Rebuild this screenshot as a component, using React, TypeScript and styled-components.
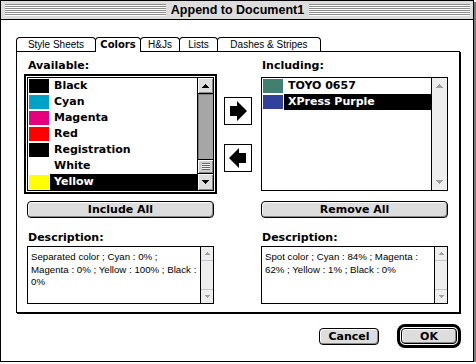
import React from "react";
import styled, { createGlobalStyle, css } from "styled-components";

const GlobalStyle = createGlobalStyle`
  html, body { margin: 0; padding: 0; background: #ffffff; }
  body { font-family: "DejaVu Sans", "Liberation Sans", sans-serif; color: #000; }
  * { box-sizing: border-box; }
`;

const CHARCOAL = `"DejaVu Sans", "Liberation Sans", sans-serif`;
const GENEVA = `"Liberation Sans", "Arial", sans-serif`;

const Window = styled.div`
  width: 474px;
  height: 362px;
  border: 1px solid #000;
  box-shadow: 2px 2px 0 #7a7a7a;
  background: #fff;
  display: flex;
  flex-direction: column;
`;

const TitleBar = styled.div`
  height: 19px;
  flex: none;
  background: #dddddd;
  border-bottom: 1px solid #000;
  display: flex;
  align-items: center;
  gap: 5px;
  padding: 0 3px 0 4px;
`;

const Stripes = styled.div`
  flex: 1;
  height: 12px;
  background: repeating-linear-gradient(to bottom, #8c8c8c 0 1px, #ffffff 1px 2px);
`;

const Title = styled.div`
  font-family: "Liberation Sans", Arial, sans-serif;
  font-weight: bold;
  font-size: 12.5px;
  line-height: 18px;
  white-space: nowrap;
`;

const Content = styled.div`
  flex: 1;
  display: flex;
  flex-direction: column;
  padding: 17px 12px 13px 15px;
`;

const TabRow = styled.div`
  display: flex;
  height: 14px;
  align-items: flex-start;
`;

const Tab = styled.div<{ $w: number; $active?: boolean }>`
  width: ${(p) => p.$w}px;
  height: 14px;
  flex: none;
  border: 1px solid #000;
  border-bottom: none;
  border-radius: 4px 4px 0 0;
  background: #fff;
  text-align: center;
  font-family: ${GENEVA};
  font-size: 10px;
  line-height: 13px;
  white-space: nowrap;
  & + & {
    margin-left: -1px;
  }
  ${(p) =>
    p.$active &&
    css`
      position: relative;
      z-index: 1;
      height: 15px;
      font-family: ${CHARCOAL};
      font-weight: bold;
    `}
`;

const Panel = styled.div`
  width: 444px;
  height: 262px;
  flex: none;
  border: 1px solid #000;
  box-shadow: 1px 1px 0 #000;
  padding: 6px 11px 8px 10px;
  display: flex;
`;

const Column = styled.div`
  width: 187px;
  flex: none;
  display: flex;
  flex-direction: column;
`;

const MiddleColumn = styled.div`
  width: 47px;
  flex: none;
  display: flex;
  flex-direction: column;
  align-items: center;
  padding-top: 39px;
  gap: 19px;
`;

const Label = styled.div<{ $top?: number }>`
  height: 16px;
  padding-left: 1px;
  margin-top: ${(p) => p.$top ?? 0}px;
  font-family: ${CHARCOAL};
  font-weight: bold;
  font-size: 11px;
  line-height: 16px;
  white-space: nowrap;
`;

const ListFrame = styled.div<{ $focused?: boolean }>`
  height: 114px;
  margin-top: 3px;
  border: 1px solid #000;
  display: flex;
  background: #fff;
  ${(p) =>
    p.$focused &&
    css`
      box-shadow: 0 0 0 1px #fff, 0 0 0 3px #000;
    `}
`;

const Rows = styled.div`
  flex: 1;
  display: flex;
  flex-direction: column;
  overflow: hidden;
`;

const Row = styled.div`
  height: 16px;
  flex: none;
  display: flex;
`;

const SwatchCell = styled.div`
  width: 22px;
  flex: none;
  padding: 1px;
`;

const Swatch = styled.div<{ $c: string }>`
  width: 20px;
  height: 14px;
  background: ${(p) => p.$c};
`;

const Name = styled.div<{ $sel?: boolean }>`
  flex: 1;
  padding-left: 4px;
  font-family: ${CHARCOAL};
  font-weight: bold;
  font-size: 11px;
  line-height: 16px;
  white-space: nowrap;
  background: ${(p) => (p.$sel ? "#000" : "transparent")};
  color: ${(p) => (p.$sel ? "#fff" : "#000")};
`;

const ScrollBar = styled.div<{ $w: number; $active?: boolean }>`
  width: ${(p) => p.$w}px;
  flex: none;
  border-left: 1px solid #000;
  display: flex;
  flex-direction: column;
  background: ${(p) => (p.$active ? "#a6a6a6" : "#eeeeee")};
`;

const ArrowCell = styled.div<{ $h: number; $active?: boolean; $end?: boolean; $lined?: boolean }>`
  height: ${(p) => p.$h}px;
  flex: none;
  display: flex;
  align-items: center;
  justify-content: center;
  ${(p) =>
    p.$active
      ? css`
          background: #dddddd;
          box-shadow: inset 1px 1px 0 #fff, inset -1px -1px 0 #888;
          ${p.$end ? "border-top" : "border-bottom"}: 1px solid #000;
        `
      : p.$lined
      ? css`
          ${p.$end ? "border-top" : "border-bottom"}: 1px solid #c4c4c4;
        `
      : ""}
`;

const Track = styled.div<{ $active?: boolean }>`
  flex: 1;
  ${(p) =>
    p.$active &&
    css`
      box-shadow: inset 1px 1px 0 #7a7a7a;
    `}
`;

const Thumb = styled.div`
  height: 14px;
  flex: none;
  background: #cfcfcf;
  border-top: 1px solid #000;
  box-shadow: inset 1px 1px 0 #fff, inset -1px -1px 0 #888;
  display: flex;
  align-items: center;
  justify-content: center;
`;

const Grip = styled.div`
  width: 8px;
  height: 7px;
  background: repeating-linear-gradient(to bottom, #666 0 1px, #f4f4f4 1px 2px);
`;

const Tri = ({ dir, color }: { dir: "up" | "down"; color: string }) => (
  <svg width="7" height="4" viewBox="0 0 7 4" shapeRendering="crispEdges">
    <polygon points={dir === "up" ? "3.5,0 7,4 0,4" : "0,0 7,0 3.5,4"} fill={color} />
  </svg>
);

const SmallTri = ({ dir, color }: { dir: "up" | "down"; color: string }) => (
  <svg width="5" height="3" viewBox="0 0 5 3" shapeRendering="crispEdges">
    <polygon points={dir === "up" ? "2.5,0 5,3 0,3" : "0,0 5,0 2.5,3"} fill={color} />
  </svg>
);

const PushButton = styled.button<{ $w?: number; $h: number }>`
  width: ${(p) => (p.$w ? `${p.$w}px` : "100%")};
  height: ${(p) => p.$h}px;
  flex: none;
  margin: 0;
  padding: 0;
  border: 1px solid #000;
  border-radius: 4px;
  background: #dddddd;
  box-shadow: inset 1px 1px 0 #fff, inset -1px -1px 0 #8a8a8a;
  font-family: ${CHARCOAL};
  font-weight: bold;
  font-size: 11px;
  line-height: 1;
  color: #000;
`;

const WideButton = styled(PushButton)`
  margin-top: 10px;
`;

const DefaultRing = styled.div`
  border: 3px solid #000;
  border-radius: 8px;
  padding: 1px;
  display: flex;
`;

const ArrowButton = styled.div`
  width: 28px;
  height: 28px;
  border: 1px solid #000;
  background: #fff;
  display: flex;
`;

const DescBox = styled.div`
  height: 58px;
  border: 1px solid #000;
  display: flex;
`;

const DescText = styled.div`
  flex: 1;
  padding: 4px 3px;
  font-family: ${GENEVA};
  font-size: 9.7px;
  line-height: 12.5px;
  white-space: nowrap;
`;

const Line = styled.div``;

const Footer = styled.div`
  margin-top: 11px;
  width: 445px;
  display: flex;
  justify-content: flex-end;
  align-items: center;
  gap: 18px;
`;

type Item = { name: string; color: string; selected?: boolean };

const available: Item[] = [
  { name: "Black", color: "#000000" },
  { name: "Cyan", color: "#00a2c8" },
  { name: "Magenta", color: "#e6007e" },
  { name: "Red", color: "#ff0000" },
  { name: "Registration", color: "#000000" },
  { name: "White", color: "#ffffff" },
  { name: "Yellow", color: "#ffff00", selected: true },
];

const including: Item[] = [
  { name: "TOYO 0657", color: "#3f806e" },
  { name: "XPress Purple", color: "#31409a", selected: true },
];

const tabs = [
  { label: "Style Sheets", w: 80 },
  { label: "Colors", w: 46, active: true },
  { label: "H&Js", w: 40 },
  { label: "Lists", w: 39 },
  { label: "Dashes & Stripes", w: 104 },
];

const ActiveScroll = () => (
  <ScrollBar $w={16} $active>
    <ArrowCell $h={16} $active>
      <Tri dir="up" color="#000" />
    </ArrowCell>
    <Track $active />
    <Thumb>
      <Grip />
    </Thumb>
    <ArrowCell $h={17} $active $end>
      <Tri dir="down" color="#000" />
    </ArrowCell>
  </ScrollBar>
);

const InactiveScroll = ({ w, h, lined }: { w: number; h: number; lined?: boolean }) => (
  <ScrollBar $w={w}>
    <ArrowCell $h={h} $lined={lined}>
      {w > 14 ? <Tri dir="up" color="#a0a0a0" /> : <SmallTri dir="up" color="#a0a0a0" />}
    </ArrowCell>
    <Track />
    <ArrowCell $h={h} $end $lined={lined}>
      {w > 14 ? <Tri dir="down" color="#a0a0a0" /> : <SmallTri dir="down" color="#a0a0a0" />}
    </ArrowCell>
  </ScrollBar>
);

const ColorList = ({ items, focused }: { items: Item[]; focused?: boolean }) => (
  <ListFrame $focused={focused}>
    <Rows>
      {items.map((it) => (
        <Row key={it.name}>
          <SwatchCell>
            <Swatch $c={it.color} />
          </SwatchCell>
          <Name $sel={it.selected}>{it.name}</Name>
        </Row>
      ))}
    </Rows>
    {focused ? <ActiveScroll /> : <InactiveScroll w={16} h={16} />}
  </ListFrame>
);

const Description = ({ lines }: { lines: string[] }) => (
  <DescBox>
    <DescText>
      {lines.map((l, i) => (
        <Line key={i}>{l}</Line>
      ))}
    </DescText>
    <InactiveScroll w={13} h={14} lined />
  </DescBox>
);

const RightArrow = () => (
  <svg width="26" height="26" viewBox="0 0 26 26">
    <polygon points="5,8 12,8 12,3 22,13 12,23 12,18 5,18" fill="#000" />
  </svg>
);

const LeftArrow = () => (
  <svg width="26" height="26" viewBox="0 0 26 26">
    <polygon points="21,8 14,8 14,3 4,13 14,23 14,18 21,18" fill="#000" />
  </svg>
);

export default function App() {
  return (
    <>
      <GlobalStyle />
      <Window>
        <TitleBar>
          <Stripes />
          <Title>Append to Document1</Title>
          <Stripes />
        </TitleBar>
        <Content>
          <TabRow>
            {tabs.map((t) => (
              <Tab key={t.label} $w={t.w} $active={t.active}>
                {t.label}
              </Tab>
            ))}
          </TabRow>
          <Panel>
            <Column>
              <Label>Available:</Label>
              <ColorList items={available} focused />
              <WideButton $h={17}>Include All</WideButton>
              <Label $top={12}>Description:</Label>
              <Description
                lines={[
                  "Separated color ; Cyan : 0% ;",
                  "Magenta : 0% ; Yellow : 100% ; Black :",
                  "0%",
                ]}
              />
            </Column>
            <MiddleColumn>
              <ArrowButton>
                <RightArrow />
              </ArrowButton>
              <ArrowButton>
                <LeftArrow />
              </ArrowButton>
            </MiddleColumn>
            <Column>
              <Label>Including:</Label>
              <ColorList items={including} />
              <WideButton $h={17}>Remove All</WideButton>
              <Label $top={12}>Description:</Label>
              <Description
                lines={["Spot color ; Cyan : 84% ; Magenta :", "62% ; Yellow : 1% ; Black : 0%"]}
              />
            </Column>
          </Panel>
          <Footer>
            <PushButton $w={60} $h={17}>
              Cancel
            </PushButton>
            <DefaultRing>
              <PushButton $w={56} $h={16}>
                OK
              </PushButton>
            </DefaultRing>
          </Footer>
        </Content>
      </Window>
    </>
  );
}
